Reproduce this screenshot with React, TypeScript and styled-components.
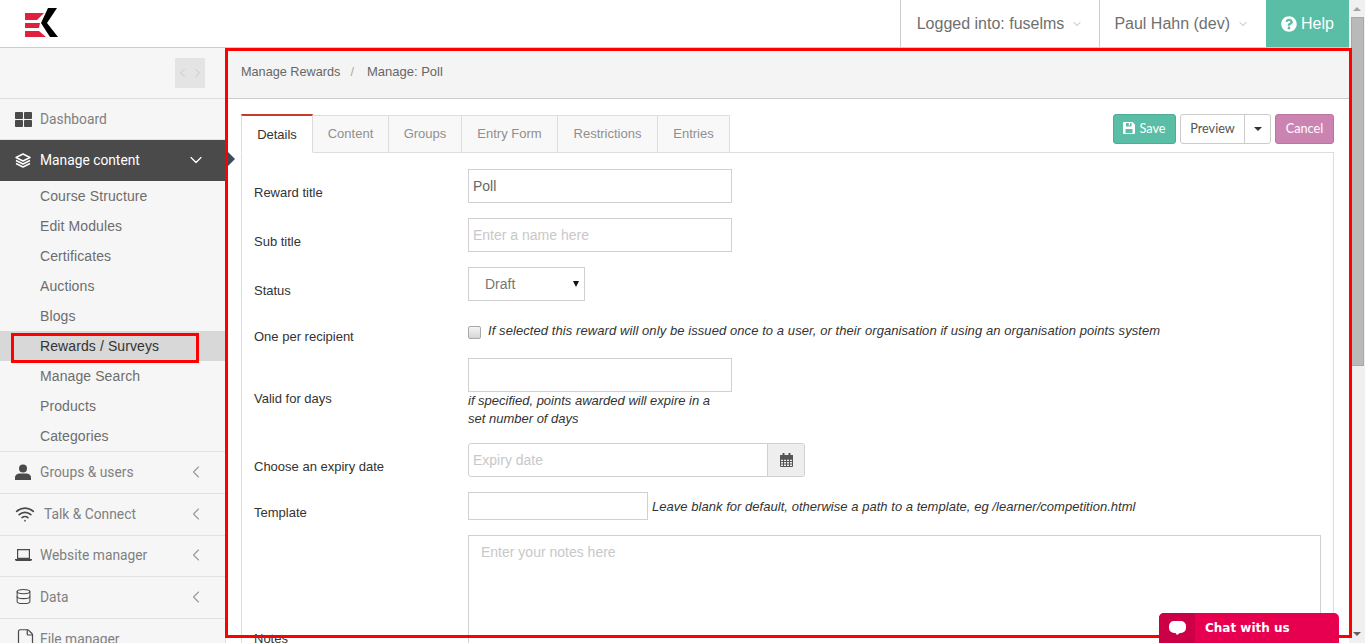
import React from 'react'
import styled, { createGlobalStyle } from 'styled-components'
import { ChevronDown, ChevronLeft, ChevronRight, Database, File, Wifi } from 'lucide-react'
import { FaQuestionCircle, FaThLarge } from 'react-icons/fa'

const GlobalStyle = createGlobalStyle`
  html, body {
    margin: 0;
    padding: 0;
    height: 100%;
    overflow: hidden;
    background: #fff;
  }
  * {
    box-sizing: border-box;
  }
`

const Page = styled.div`
  position: relative;
  display: flex;
  width: 100%;
  height: 643px;
  overflow: hidden;
  font-family: 'Liberation Sans', Arial, sans-serif;
`

const Main = styled.div`
  flex: 1;
  min-width: 0;
  display: flex;
  flex-direction: column;
`

const TopBar = styled.header`
  flex: none;
  display: flex;
  justify-content: space-between;
  height: 48px;
  border-bottom: 1px solid #ccc;
`

const Logo = styled.svg`
  width: 60px;
  height: 47px;
  margin-left: 1px;
`

const TopMenu = styled.nav`
  display: flex;
`

const TopItem = styled.div<{ $left: number; $right: number }>`
  display: flex;
  align-items: center;
  gap: 7px;
  padding: 0 ${(p) => p.$right}px 0 ${(p) => p.$left}px;
  border-left: 1px solid #ccc;
  font-size: 16px;
  color: #6f6f6f;
`

const HelpLink = styled.a`
  display: flex;
  align-items: center;
  gap: 4px;
  width: 83px;
  padding-left: 15px;
  background: #5abda6;
  color: #fff;
  font-size: 16px;
`

const Body = styled.div`
  flex: 1;
  min-height: 0;
  display: flex;
`

const Sidebar = styled.aside`
  position: relative;
  flex: none;
  width: 226px;
  background: #f6f6f6;
  border-right: 1px solid #ddd;
  font-family: Roboto, sans-serif;
`

const ToggleRow = styled.div`
  display: flex;
  justify-content: flex-end;
  align-items: center;
  height: 51px;
  padding-right: 20px;
  border-bottom: 1px solid #ddd;
`

const Toggle = styled.div`
  display: flex;
  align-items: center;
  justify-content: center;
  gap: 0;
  width: 30px;
  height: 30px;
  background: #e4e4e4;
  color: #bdbdbd;
`

const NavItem = styled.div<{ $active?: boolean; $gap?: number; $height?: number; $lift?: boolean }>`
  display: flex;
  align-items: center;
  gap: ${(p) => p.$gap ?? 9}px;
  height: ${(p) => p.$height ?? 42}px;
  padding: 0 19px ${(p) => (p.$lift ? 2 : 0)}px 15px;
  border-bottom: 1px solid ${(p) => (p.$active ? 'transparent' : '#e2e2e2')};
  background: ${(p) => (p.$active ? '#4a4a4a' : 'transparent')};
  color: ${(p) => (p.$active ? '#fff' : '#808080')};
  font-size: 13.8px;
`

const IconSlot = styled.span<{ $dark?: boolean }>`
  flex: none;
  display: flex;
  align-items: center;
  color: ${(p) => (p.$dark ? 'inherit' : '#4a4a4a')};
`

const NavLabel = styled.span`
  flex: 1;
`

const NavChevron = styled.span`
  flex: none;
  display: flex;
  color: #999;
`

const Pointer = styled.span`
  position: absolute;
  top: 103px;
  right: -10px;
  width: 0;
  height: 0;
  border-top: 8px solid transparent;
  border-bottom: 8px solid transparent;
  border-left: 8px solid #3f4a5a;
`

const SubList = styled.div`
  display: flex;
  flex-direction: column;
  border-bottom: 1px solid #e2e2e2;
`

const SubItem = styled.div<{ $current?: boolean }>`
  height: 30px;
  line-height: 30px;
  padding-left: 40px;
  font-family: 'Liberation Sans', Arial, sans-serif;
  font-size: 14px;
  letter-spacing: 0.1px;
  background: ${(p) => (p.$current ? '#d8d8d8' : 'transparent')};
  color: ${(p) => (p.$current ? '#333' : '#6d6d6d')};
`

const Content = styled.main`
  flex: 1;
  min-width: 0;
  display: flex;
  flex-direction: column;
`

const Crumbs = styled.div`
  flex: none;
  display: flex;
  align-items: center;
  height: 51px;
  padding: 0 0 3px 15px;
  background: #f4f4f4;
  border-bottom: 1px solid #ccc;
  font-size: 12.7px;
  color: #666;
`

const CrumbSep = styled.span`
  margin: 0 13px 0 10px;
  color: #aaa;
`

const CrumbCurrent = styled.span`
  font-size: 13px;
`

const Workspace = styled.div`
  padding: 15px 15px 0 15px;
`

const TabStrip = styled.div`
  display: flex;
  justify-content: space-between;
`

const Tabs = styled.div`
  display: flex;
  height: 39px;
  margin-bottom: -1px;
`

const Tab = styled.div<{ $active?: boolean; $width: number }>`
  width: ${(p) => p.$width}px;
  padding-top: ${(p) => (p.$active ? 11 : 10)}px;
  text-align: center;
  font-size: 13px;
  margin-top: ${(p) => (p.$active ? 0 : 1)}px;
  border: 1px solid #ddd;
  border-left-width: ${(p) => (p.$active ? 1 : 0)}px;
  border-top: ${(p) => (p.$active ? '2px solid #c9392c' : '1px solid #ddd')};
  border-bottom-color: ${(p) => (p.$active ? '#fff' : '#ddd')};
  background: ${(p) => (p.$active ? '#fff' : '#f8f8f8')};
  color: ${(p) => (p.$active ? '#333' : '#8f8f8f')};
`

const Actions = styled.div`
  display: flex;
  gap: 4px;
  height: 30px;
  font-family: Lato, sans-serif;
  font-size: 12.7px;
`

const ActionButton = styled.button<{ $bg: string; $edge: string; $width: number }>`
  display: flex;
  align-items: center;
  justify-content: center;
  gap: 4px;
  width: ${(p) => p.$width}px;
  padding: 0 0 2px;
  background: ${(p) => p.$bg};
  border: 1px solid ${(p) => p.$edge};
  border-radius: 3px;
  color: #fff;
  font: inherit;
`

const SplitButton = styled.div`
  display: flex;
  width: 91px;
  border: 1px solid #ccc;
  border-radius: 3px;
  color: #555;
`

const SplitMain = styled.span`
  flex: 1;
  display: flex;
  align-items: center;
  justify-content: center;
  padding-bottom: 2px;
  border-right: 1px solid #ccc;
`

const SplitCaret = styled.span`
  flex: none;
  width: 25px;
  display: flex;
  align-items: center;
  justify-content: center;
  &::after {
    content: '';
    border-top: 4px solid #333;
    border-left: 4px solid transparent;
    border-right: 4px solid transparent;
  }
`

const Panel = styled.section`
  height: 560px;
  padding: 16px 12px 0;
  border: 1px solid #ddd;
  border-bottom: 0;
`

const Row = styled.div<{ $height: number; $gap?: number }>`
  display: flex;
  align-items: center;
  height: ${(p) => p.$height}px;
  margin-bottom: ${(p) => p.$gap ?? 15}px;
`

const Label = styled.label`
  flex: none;
  width: 214px;
  padding-top: 12px;
  font-size: 13px;
  color: #333;
`

const Field = styled.div`
  flex: 1;
  min-width: 0;
`

const TextInput = styled.input<{ $width: number; $height?: number }>`
  display: block;
  width: ${(p) => p.$width}px;
  height: ${(p) => p.$height ?? 34}px;
  padding: 0 4px;
  border: 1px solid #d0d0d0;
  border-radius: 0;
  outline: 0;
  font-family: inherit;
  font-size: 14px;
  color: #666;
  &::placeholder {
    color: #c8c8c8;
    opacity: 1;
  }
`

const StatusSelect = styled.div`
  position: relative;
  width: 117px;
  height: 34px;
  line-height: 32px;
  padding-left: 16px;
  border: 1px solid #d0d0d0;
  font-size: 14px;
  color: #777;
  &::after {
    content: '';
    position: absolute;
    top: 13px;
    right: 5px;
    border-top: 6px solid #111;
    border-left: 3px solid transparent;
    border-right: 3px solid transparent;
  }
`

const Inline = styled.div`
  display: flex;
  align-items: center;
  gap: 4px;
`

const CheckBox = styled.span`
  flex: none;
  width: 13px;
  height: 13px;
  margin: 5px 3px 0 0;
  background: linear-gradient(#f4f4f4, #d6d6d6);
  border: 1px solid #a9a9a9;
  border-radius: 2px;
`

const Hint = styled.p<{ $tracking?: number }>`
  margin: 0;
  font-size: 13px;
  font-style: italic;
  line-height: 18px;
  letter-spacing: ${(p) => p.$tracking ?? 0}px;
  color: #333;
`

const WrappedHint = styled(Hint)`
  width: 256px;
`

const OffsetHint = styled(Hint)`
  padding-top: 2px;
`

const InputGroup = styled.div`
  display: flex;
  width: 337px;
`

const GroupInput = styled(TextInput)`
  flex: 1;
  border-radius: 3px 0 0 3px;
`

const Addon = styled.span`
  flex: none;
  width: 38px;
  display: flex;
  align-items: center;
  justify-content: center;
  margin-left: -1px;
  background: #eee;
  border: 1px solid #d0d0d0;
  border-radius: 0 3px 3px 0;
  color: #555;
`

const Notes = styled.div`
  width: 853px;
  height: 194px;
  padding: 8px 12px;
  border: 1px solid #d0d0d0;
  font-size: 14px;
  color: #c8c8c8;
`

const ScrollTrack = styled.div`
  position: relative;
  flex: none;
  width: 16px;
  background: #f0f0f0;
`

const ScrollThumb = styled.div`
  height: 349px;
  margin: 17px 1px 0 2px;
  background: #b9b9b9;
  border: 1px solid #a8a8a8;
`

const ScrollArrow = styled.span<{ $down?: boolean }>`
  position: absolute;
  left: 4px;
  ${(p) => (p.$down ? 'bottom: 7px;' : 'top: 7px;')}
  border-left: 4px solid transparent;
  border-right: 4px solid transparent;
  ${(p) => (p.$down ? 'border-top: 4px solid #606060;' : 'border-bottom: 4px solid #a3a3a3;')}
`

const AnnotationBox = styled.div<{ $left: number; $top: number; $width: number; $height: number }>`
  position: absolute;
  left: ${(p) => p.$left}px;
  top: ${(p) => p.$top}px;
  width: ${(p) => p.$width}px;
  height: ${(p) => p.$height}px;
  border: 3px solid #f00;
  pointer-events: none;
`

const ChatWidget = styled.div`
  position: absolute;
  right: 26px;
  bottom: 0;
  display: flex;
  width: 180px;
  height: 30px;
  background: #e6004f;
  border-radius: 5px 5px 0 0;
  overflow: hidden;
  color: #fff;
  font-family: 'DejaVu Sans', sans-serif;
  font-size: 12px;
  font-weight: 700;
`

const ChatIcon = styled.span`
  flex: none;
  display: flex;
  align-items: center;
  justify-content: center;
  width: 36px;
  background: #cc0047;
`

const ChatLabel = styled.span`
  padding: 8px 0 0 10px;
`

const subItems = [
  'Course Structure',
  'Edit Modules',
  'Certificates',
  'Auctions',
  'Blogs',
  'Rewards / Surveys',
  'Manage Search',
  'Products',
  'Categories',
]

const tabs = [
  { name: 'Details', width: 72 },
  { name: 'Content', width: 76 },
  { name: 'Groups', width: 73 },
  { name: 'Entry Form', width: 96 },
  { name: 'Restrictions', width: 100 },
  { name: 'Entries', width: 72 },
]

const LayersIcon = () => (
  <svg width="16" height="15" viewBox="0 0 16 15" fill="none" stroke="currentColor" strokeWidth="1.4" strokeLinejoin="round">
    <path d="M8 1l7 3.500L8 8 1 4.500z" />
    <path d="M1 7.500L8 11l7-3.500" />
    <path d="M1 10.500L8 14l7-3.500" />
  </svg>
)

const PersonIcon = () => (
  <svg width="16" height="16" viewBox="0 0 16 16" fill="currentColor">
    <circle cx="8" cy="4.500" r="4" />
    <path d="M0 16v-2.500C0 11 2.500 9.500 5 9.500h6c2.500 0 5 1.500 5 4V16z" />
  </svg>
)

const LaptopIcon = () => (
  <svg width="17" height="14" viewBox="0 0 17 14" fill="currentColor">
    <path d="M2 1h13v10H2zM3.200 2.200v7.600h10.600V2.200z" fillRule="evenodd" />
    <path d="M0 11h17v1l-1 1H1l-1-1z" />
  </svg>
)

const SaveIcon = () => (
  <svg width="12" height="12" viewBox="0 0 12 12" fill="currentColor">
    <path fillRule="evenodd" d="M1 0h8.500L12 2.500V11a1 1 0 0 1-1 1H1a1 1 0 0 1-1-1V1a1 1 0 0 1 1-1zM3 1v3.500h5.500V1H7v2.500H5.800V1zM2.500 7v4h7V7z" />
  </svg>
)

const CalendarIcon = () => (
  <svg width="13" height="14" viewBox="0 0 13 14" fill="none" stroke="currentColor">
    <path d="M.5 2.500h12v11H.5zM.5 6h12M.5 8.500h12M.5 11h12M3.500 6v7.500M6.500 6v7.500M9.500 6v7.500" />
    <path fill="currentColor" d="M.5 2.500h12V6H.5z" />
    <path strokeWidth="2" d="M3.500 0v3M9.500 0v3" />
  </svg>
)

const ChatBubble = () => (
  <svg width="17" height="14" viewBox="0 0 17 14">
    <path fill="#fff" d="M5 0h7a5 5 0 0 1 5 5v2a5 5 0 0 1-5 5h-1l-3 2-1.500-2H5a5 5 0 0 1-5-5V5a5 5 0 0 1 5-5z" />
  </svg>
)

const CollapseChevron = () => (
  <NavChevron>
    <ChevronLeft size={20} strokeWidth={1.3} />
  </NavChevron>
)

export default function App(): JSX.Element {
  return (
    <Page>
      <GlobalStyle />
      <Main>
        <TopBar>
          <Logo viewBox="0 0 60 47">
            <path fill="#e0203f" d="M24 13h19l-7 7H24zM24 23h15l-1 5H24zM24 31h14l7 6H24z" />
            <path fill="#000" d="M47 8h9L46 23l11 14h-8L40 23z" />
          </Logo>
          <TopMenu>
            <TopItem $left={16} $right={16}>
              Logged into: fuselms <ChevronDown size={12} color="#b5b5b5" />
            </TopItem>
            <TopItem $left={14} $right={17}>
              Paul Hahn (dev) <ChevronDown size={12} color="#b5b5b5" />
            </TopItem>
            <HelpLink>
              <FaQuestionCircle size={16} /> Help
            </HelpLink>
          </TopMenu>
        </TopBar>
        <Body>
          <Sidebar>
            <ToggleRow>
              <Toggle>
                <ChevronLeft size={18} strokeWidth={1.2} />
                <ChevronRight size={18} strokeWidth={1.2} />
              </Toggle>
            </ToggleRow>
            <NavItem $height={41} $gap={8}>
              <IconSlot><FaThLarge size={17} /></IconSlot>
              <NavLabel>Dashboard</NavLabel>
            </NavItem>
            <NavItem $active $height={41}>
              <IconSlot $dark><LayersIcon /></IconSlot>
              <NavLabel>Manage content</NavLabel>
              <ChevronDown size={20} strokeWidth={1.5} />
            </NavItem>
            <Pointer />
            <SubList>
              {subItems.map((name) => (
                <SubItem key={name} $current={name === 'Rewards / Surveys'}>{name}</SubItem>
              ))}
            </SubList>
            <NavItem $lift>
              <IconSlot><PersonIcon /></IconSlot>
              <NavLabel>Groups &amp; users</NavLabel>
              <CollapseChevron />
            </NavItem>
            <NavItem $lift>
              <IconSlot><Wifi size={20} /></IconSlot>
              <NavLabel>Talk &amp; Connect</NavLabel>
              <CollapseChevron />
            </NavItem>
            <NavItem $lift $height={41} $gap={8}>
              <IconSlot><LaptopIcon /></IconSlot>
              <NavLabel>Website manager</NavLabel>
              <CollapseChevron />
            </NavItem>
            <NavItem $lift $gap={8}>
              <IconSlot><Database size={17} strokeWidth={1.5} /></IconSlot>
              <NavLabel>Data</NavLabel>
              <CollapseChevron />
            </NavItem>
            <NavItem $lift $gap={4}>
              <IconSlot><File size={21} strokeWidth={1.4} /></IconSlot>
              <NavLabel>File manager</NavLabel>
            </NavItem>
          </Sidebar>
          <Content>
            <Crumbs>
              Manage Rewards<CrumbSep>/</CrumbSep><CrumbCurrent>Manage: Poll</CrumbCurrent>
            </Crumbs>
            <Workspace>
              <TabStrip>
                <Tabs>
                  {tabs.map((tab) => (
                    <Tab key={tab.name} $active={tab.name === 'Details'} $width={tab.width}>{tab.name}</Tab>
                  ))}
                </Tabs>
                <Actions>
                  <ActionButton $bg="#5abda6" $edge="#4eab95" $width={63}>
                    <SaveIcon /> Save
                  </ActionButton>
                  <SplitButton>
                    <SplitMain>Preview</SplitMain>
                    <SplitCaret />
                  </SplitButton>
                  <ActionButton $bg="#cb84b1" $edge="#bb74a1" $width={59}>Cancel</ActionButton>
                </Actions>
              </TabStrip>
              <Panel>
                <Row $height={34}>
                  <Label>Reward title</Label>
                  <Field><TextInput $width={264} defaultValue="Poll" /></Field>
                </Row>
                <Row $height={34}>
                  <Label>Sub title</Label>
                  <Field><TextInput $width={264} placeholder="Enter a name here" /></Field>
                </Row>
                <Row $height={34}>
                  <Label>Status</Label>
                  <Field><StatusSelect>Draft</StatusSelect></Field>
                </Row>
                <Row $height={28} $gap={14}>
                  <Label>One per recipient</Label>
                  <Field>
                    <Inline>
                      <CheckBox />
                      <OffsetHint $tracking={0.08}>If selected this reward will only be issued once to a user, or their organisation if using an organisation points system</OffsetHint>
                    </Inline>
                  </Field>
                </Row>
                <Row $height={69} $gap={16}>
                  <Label>Valid for days</Label>
                  <Field>
                    <TextInput $width={264} />
                    <WrappedHint>if specified, points awarded will expire in a set number of days</WrappedHint>
                  </Field>
                </Row>
                <Row $height={34}>
                  <Label>Choose an expiry date</Label>
                  <Field>
                    <InputGroup>
                      <GroupInput $width={300} placeholder="Expiry date" />
                      <Addon><CalendarIcon /></Addon>
                    </InputGroup>
                  </Field>
                </Row>
                <Row $height={28}>
                  <Label>Template</Label>
                  <Field>
                    <Inline>
                      <TextInput $width={180} $height={28} />
                      <OffsetHint $tracking={0.035}>Leave blank for default, otherwise a path to a template, eg /learner/competition.html</OffsetHint>
                    </Inline>
                  </Field>
                </Row>
                <Row $height={194}>
                  <Label>Notes</Label>
                  <Field><Notes>Enter your notes here</Notes></Field>
                </Row>
              </Panel>
            </Workspace>
          </Content>
        </Body>
      </Main>
      <ScrollTrack>
        <ScrollArrow />
        <ScrollThumb />
        <ScrollArrow $down />
      </ScrollTrack>
      <AnnotationBox $left={225} $top={48} $width={1127} $height={590} />
      <AnnotationBox $left={11} $top={333} $width={188} $height={30} />
      <ChatWidget>
        <ChatIcon>
          <ChatBubble />
        </ChatIcon>
        <ChatLabel>Chat with us</ChatLabel>
      </ChatWidget>
    </Page>
  )
}
